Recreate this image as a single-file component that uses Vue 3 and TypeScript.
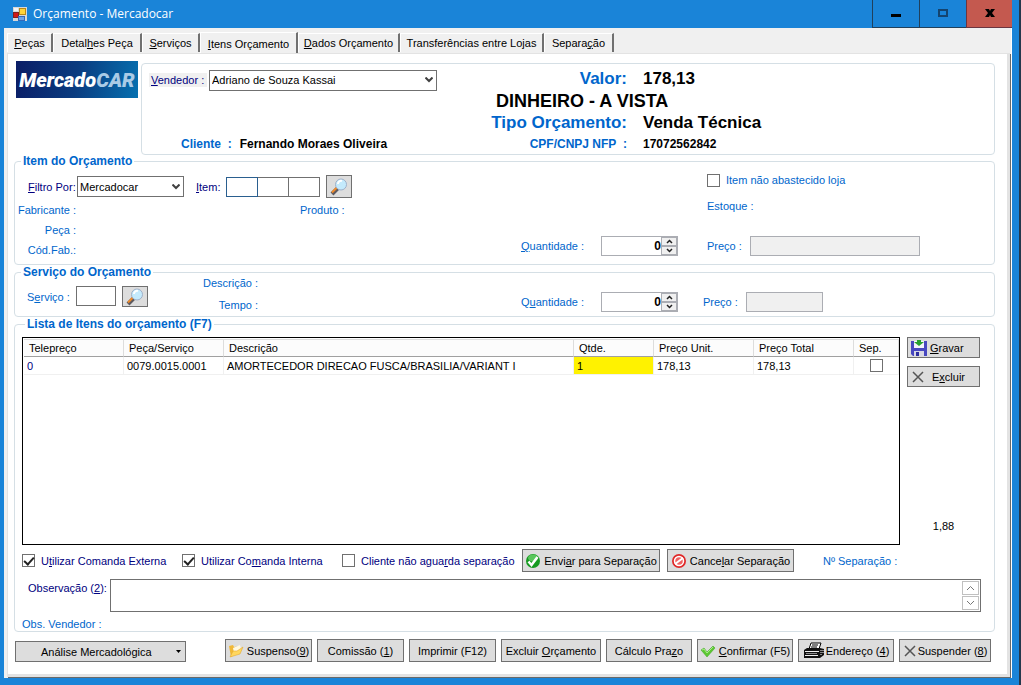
<script setup lang="ts">
import { h, ref } from 'vue'

interface Item {
  code: string
  part: string
  description: string
  qty: string
  unit: string
  total: string
  separated: boolean
}

// Renders a caption in which "&" marks the access key letter.
const Caption = (props: { text: string }) => {
  const at = props.text.indexOf('&')
  if (at < 0) return h('span', props.text)
  return h('span', [props.text.slice(0, at), h('u', props.text[at + 1]), props.text.slice(at + 2)])
}
Caption.props = ['text']

const tabs = [
  { text: '&Peças', size: 'w46' },
  { text: 'Detal&hes Peça', size: 'w88' },
  { text: '&Serviços', size: 'w58' },
  { text: '&Itens Orçamento', size: 'w98' },
  { text: '&Dados Orçamento', size: 'w102' },
  { text: 'Transferências entre Lo&jas', size: 'w142' },
  { text: 'Separa&ção', size: 'w70' },
]
const activeTab = ref(3)

const columns = ['Telepreço', 'Peça/Serviço', 'Descrição', 'Qtde.', 'Preço Unit.', 'Preço Total', 'Sep.']
const items = ref<Item[]>([
  {
    code: '0',
    part: '0079.0015.0001',
    description: 'AMORTECEDOR DIRECAO FUSCA/BRASILIA/VARIANT I',
    qty: '1',
    unit: '178,13',
    total: '178,13',
    separated: false,
  },
])

const itemQty = ref(0)
const serviceQty = ref(0)
const notStocked = ref(false)
const externalOrder = ref(true)
const internalOrder = ref(true)
const noWait = ref(false)
const note = ref('')
</script>

<template>
  <div class="window">
    <header class="titlebar">
      <svg class="app-icon" viewBox="0 0 14 14" width="14" height="14">
        <rect width="14" height="14" fill="#d8d8d8" />
        <rect x="0.5" y="5.5" width="5" height="5" fill="#d01818" stroke="#802020" />
        <rect x="6.5" y="1.5" width="6" height="6" fill="#ffd43a" stroke="#b88a18" />
        <rect x="5.500" y="9.500" width="6" height="4" fill="#6ba4ec" stroke="#3468b8" />
        <path d="M1 1h4v3H1z" fill="#f4f4f4" />
      </svg>
      <h1>Orçamento - Mercadocar</h1>
      <div class="window-buttons">
        <button type="button" aria-label="Minimizar">
          <svg viewBox="0 0 12 12" width="12" height="12"><path d="M1 6h10v3H1z" fill="#000" /></svg>
        </button>
        <button type="button" aria-label="Maximizar">
          <svg viewBox="0 0 12 12" width="12" height="12"><path d="M2 2h8v6H2z" fill="none" stroke="#14446f" stroke-width="2" /></svg>
        </button>
        <button type="button" class="close" aria-label="Fechar">
          <svg viewBox="0 0 12 12" width="12" height="12"><path d="M1 1h4l1 2 1-2h4L8 5l3 4H7L6 7 5 9H1l3-4z" fill="#000" /></svg>
        </button>
      </div>
    </header>

    <main class="client">
      <nav class="tabs" role="tablist">
        <button
          v-for="(tab, i) in tabs"
          :key="tab.text"
          type="button"
          role="tab"
          :class="['tab', tab.size, { active: i === activeTab }]"
          :aria-selected="i === activeTab"
          @click="activeTab = i"
        >
          <Caption :text="tab.text" />
        </button>
      </nav>

      <div class="page">
        <section class="top">
          <div class="logo">Mercado<span>CAR</span></div>
          <div class="summary">
            <div class="seller">
              <label class="shaded" for="seller"><Caption text="&Vendedor :" /></label>
              <div class="combo seller-combo">
                <select id="seller"><option>Adriano de Souza Kassai</option></select>
                <svg viewBox="0 0 8 6" width="8" height="6"><path d="M0.500 0.500L4 4 7.500 0.500" /></svg>
              </div>
            </div>
            <p class="big pair"><span class="blue">Valor:</span><span>178,13</span></p>
            <p class="big payment">DINHEIRO - A VISTA</p>
            <p class="big pair"><span class="blue">Tipo Orçamento:</span><span>Venda Técnica</span></p>
            <p class="client-name"><span class="blue">Cliente&nbsp; :</span><span>Fernando Moraes Oliveira</span></p>
            <p class="strong pair"><span class="blue">CPF/CNPJ NFP&nbsp; :</span><span>17072562842</span></p>
          </div>
        </section>

        <fieldset class="item-box">
          <legend>Item do Orçamento</legend>
          <div class="left">
            <div class="line filter-line">
              <label class="navy filter-label" for="filter"><Caption text="&Filtro Por:" /></label>
              <div class="combo filter-combo">
                <select id="filter"><option>Mercadocar</option></select>
                <svg viewBox="0 0 8 6" width="8" height="6"><path d="M0.500 0.500L4 4 7.500 0.500" /></svg>
              </div>
              <label class="navy item-label" for="item1"><Caption text="&Item:" /></label>
              <div class="triple">
                <input id="item1" class="focused" type="text" />
                <input type="text" aria-label="Item, parte 2" />
                <input type="text" aria-label="Item, parte 3" />
              </div>
              <button type="button" class="btn search-btn" aria-label="Pesquisar item">
                <svg viewBox="0 0 18 18" width="18" height="18">
                  <path d="M2 16l6-6" stroke="#5d5a60" stroke-width="4" />
                  <path d="M2 14.500l5-5" stroke="#f08a28" stroke-width="2" />
                  <circle cx="11" cy="6.500" r="5.500" fill="#c4eafc" stroke="#9fb0c8" />
                  <path d="M8 6a3 3 0 0 1 4-3" fill="none" stroke="#fff" stroke-width="2" />
                </svg>
              </button>
            </div>
            <div class="facts">
              <span>Fabricante :</span><span class="product">Produto :</span>
              <span>Peça :</span><span></span>
              <span>Cód.Fab.:</span><span></span>
            </div>
          </div>
          <div class="right">
            <label class="check stock-check"><input v-model="notStocked" type="checkbox" /><span>Item não abastecido loja</span></label>
            <span class="stock">Estoque :</span>
            <div class="line amounts">
              <label class="qty-label" for="qty1"><Caption text="&Quantidade :" /></label>
              <div class="spinner">
                <input id="qty1" v-model="itemQty" type="text" />
                <button type="button" aria-label="Aumentar" @click="itemQty++"><svg viewBox="0 0 7 5" width="7" height="5"><path d="M1 4l2.500-2.500L6 4" /></svg></button>
                <button type="button" aria-label="Diminuir" @click="itemQty--"><svg viewBox="0 0 7 5" width="7" height="5"><path d="M1 1l2.500 2.500L6 1" /></svg></button>
              </div>
              <label class="price-label" for="price1">Preço :</label>
              <input id="price1" class="price wide" type="text" disabled />
            </div>
          </div>
        </fieldset>

        <fieldset class="service-box">
          <legend>Serviço do Orçamento</legend>
          <div class="left service-left">
            <label class="service-label" for="service"><Caption text="S&erviço :" /></label>
            <input id="service" class="service-input" type="text" />
            <button type="button" class="btn search-btn" aria-label="Pesquisar serviço">
              <svg viewBox="0 0 18 18" width="18" height="18">
                <path d="M2 16l6-6" stroke="#5d5a60" stroke-width="4" />
                <path d="M2 14.500l5-5" stroke="#f08a28" stroke-width="2" />
                <circle cx="11" cy="6.500" r="5.500" fill="#c4eafc" stroke="#9fb0c8" />
                <path d="M8 6a3 3 0 0 1 4-3" fill="none" stroke="#fff" stroke-width="2" />
              </svg>
            </button>
            <div class="service-facts"><span>Descrição :</span><span>Tempo :</span></div>
          </div>
          <div class="right">
            <div class="line amounts">
              <label class="qty-label" for="qty2"><Caption text="Q&uantidade :" /></label>
              <div class="spinner">
                <input id="qty2" v-model="serviceQty" type="text" />
                <button type="button" aria-label="Aumentar" @click="serviceQty++"><svg viewBox="0 0 7 5" width="7" height="5"><path d="M1 4l2.500-2.500L6 4" /></svg></button>
                <button type="button" aria-label="Diminuir" @click="serviceQty--"><svg viewBox="0 0 7 5" width="7" height="5"><path d="M1 1l2.500 2.500L6 1" /></svg></button>
              </div>
              <label class="price-label short" for="price2">Preço :</label>
              <input id="price2" class="price" type="text" disabled />
            </div>
          </div>
        </fieldset>

        <fieldset class="list-box">
          <legend>Lista de Itens do orçamento (F7)</legend>
          <div class="list-area">
            <div class="grid-frame">
              <table>
                <colgroup>
                  <col class="c100" /><col class="c100" /><col /><col class="c80" /><col class="c100" /><col class="c100" /><col class="c45" />
                </colgroup>
                <thead>
                  <tr><th v-for="c in columns" :key="c" scope="col">{{ c }}</th></tr>
                </thead>
                <tbody>
                  <tr v-for="row in items" :key="row.part">
                    <td class="code">{{ row.code }}</td>
                    <td>{{ row.part }}</td>
                    <td>{{ row.description }}</td>
                    <td class="qty">{{ row.qty }}</td>
                    <td>{{ row.unit }}</td>
                    <td>{{ row.total }}</td>
                    <td class="sep"><input v-model="row.separated" type="checkbox" aria-label="Separado" /></td>
                  </tr>
                </tbody>
              </table>
            </div>
            <aside class="list-actions">
              <button type="button" class="btn side">
                <svg viewBox="0 0 16 16" width="16" height="16">
                  <path d="M0 1h16v15H2l-2-2z" fill="#4848c0" />
                  <path d="M3 1h10v7H3z" fill="#f4f4fa" />
                  <path d="M3 11h10v5H3z" fill="#d8d8e4" />
                  <path d="M5 12h3v4H5z" fill="#3030a0" />
                  <path d="M6 0h4v2h3L8 6 3 2h3z" fill="#28a030" />
                </svg>
                <Caption text="&Gravar" />
              </button>
              <button type="button" class="btn side">
                <svg viewBox="0 0 16 16" width="16" height="16"><path d="M2 3l10 10M12 3L2 13" stroke="#555" stroke-width="1.500" /></svg>
                <Caption text="E&xcluir" />
              </button>
              <output>1,88</output>
            </aside>
          </div>

          <div class="options">
            <label class="check navy opt1"><input v-model="externalOrder" type="checkbox" /><Caption text="U&tilizar Comanda Externa" /></label>
            <label class="check navy opt1"><input v-model="internalOrder" type="checkbox" /><Caption text="Utilizar Co&manda Interna" /></label>
            <label class="check navy opt2"><input v-model="noWait" type="checkbox" /><Caption text="Cliente não agua&rda separação" /></label>
            <button type="button" class="btn send">
              <svg viewBox="0 0 16 16" width="16" height="16">
                <circle cx="8" cy="8" r="7" fill="#159a20" />
                <ellipse cx="8" cy="5" rx="5" ry="3.500" fill="#59c65c" />
                <path d="M3.500 8.500L6.500 12 12.500 4" fill="none" stroke="#fff" stroke-width="2.500" />
              </svg>
              <Caption text="Envi&ar para Separação" />
            </button>
            <button type="button" class="btn cancel">
              <svg viewBox="0 0 16 16" width="16" height="16">
                <circle cx="8" cy="8" r="7" fill="#e02828" />
                <circle cx="8" cy="8" r="4.500" fill="#f06060" stroke="#fff" stroke-width="1.500" />
                <path d="M4 11l8-6" stroke="#fff" stroke-width="2" />
              </svg>
              <Caption text="Cance&lar Separação" />
            </button>
            <span class="sep-number">Nº Separação :</span>
          </div>

          <div class="note">
            <label class="navy" for="note"><Caption text="Observação (&2):" /></label>
            <div class="note-frame">
              <textarea id="note" v-model="note"></textarea>
              <div class="scroll">
                <button type="button" aria-label="Rolar para cima"><svg viewBox="0 0 9 6" width="9" height="6"><path d="M1 5l3.500-3.500L8 5" /></svg></button>
                <button type="button" aria-label="Rolar para baixo"><svg viewBox="0 0 9 6" width="9" height="6"><path d="M1 1l3.500 3.500L8 1" /></svg></button>
              </div>
            </div>
          </div>
          <p class="seller-note">Obs. Vendedor :</p>
        </fieldset>

        <footer class="actions">
          <button type="button" class="btn analysis">
            <span>Análise Mercadológica</span>
            <svg viewBox="0 0 5 3" width="5" height="3"><path d="M0 0h5L2.500 3z" fill="#000" /></svg>
          </button>
          <button type="button" class="btn b87">
            <svg viewBox="0 0 16 16" width="16" height="16">
              <path d="M1 3l4-1 1 2 6-1-1 6-8 5z" fill="#f0b838" />
              <path d="M5 5l7-3 1 4-7 4z" fill="#fff8e0" />
              <path d="M2 14l3-6 4 0 6-4-3 7z" fill="#ffd75e" stroke="#e0a020" stroke-width="0.500" />
            </svg>
            <Caption text="Suspenso(&9)" />
          </button>
          <button type="button" class="btn b87"><Caption text="Comissão (&1)" /></button>
          <button type="button" class="btn b87"><Caption text="Imprimir (F12)" /></button>
          <button type="button" class="btn b100"><Caption text="Excluir &Orçamento" /></button>
          <button type="button" class="btn b86"><Caption text="Cálculo Pra&zo" /></button>
          <button type="button" class="btn b96">
            <svg viewBox="0 0 16 16" width="16" height="16"><path d="M1 7l3-2 3 4 6-6 2 2-8 9z" fill="#5cc832" stroke="#38a020" stroke-width="0.500" /><path d="M2 7l2-1 3 4 6-6" fill="none" stroke="#a8ec88" /></svg>
            <Caption text="&Confirmar (F5)" />
          </button>
          <button type="button" class="btn b96 printer">
            <svg viewBox="0 0 22 18" width="22" height="18">
              <path d="M6 7l2-6h10l-2 6z" fill="#fff" stroke="#000" />
              <path d="M9 3h6M8 5h6" stroke="#000" />
              <path d="M1 8l3-2h13l4 1v6l-4 3H1z" fill="#111" />
              <path d="M2 9.500h14M2 13.500h13" stroke="#eee" />
              <path d="M3 11.500h11" stroke="#888" />
              <path d="M18 8v6M20 8v4" stroke="#fff" stroke-dasharray="1 1" />
            </svg>
            <Caption text="Endereço (&4)" />
          </button>
          <button type="button" class="btn b92 suspend">
            <svg viewBox="0 0 14 16" width="14" height="16"><path d="M2 3l10 10M12 3L2 13" stroke="#555" stroke-width="1.500" /></svg>
            <Caption text="Suspender (&8)" />
          </button>
        </footer>
      </div>
    </main>
  </div>
</template>

<style>
body {
  margin: 0;
}
</style>

<style scoped>
* {
  box-sizing: border-box;
}
.window {
  display: flex;
  flex-direction: column;
  min-height: 100vh;
  padding: 0 7px 7px 4px;
  border-right: 2px solid #24384c;
  background: #1a84d8;
  color: #000;
  font: 11px/14px "Liberation Sans", Arial, sans-serif;
}
button,
input,
select,
textarea {
  margin: 0;
  padding: 0;
  border: 1px solid #707070;
  border-radius: 0;
  background: #fff;
  color: #000;
  font: inherit;
}
p {
  margin: 0;
}
:deep(u) {
  text-underline-offset: 1px;
}
.titlebar {
  display: flex;
  align-items: center;
  height: 28px;
  padding-left: 9px;
}
h1 {
  flex: 1;
  margin: 0 0 0 6px;
  color: #fff;
  font: 12px/18px "Open Sans", "Noto Sans", sans-serif;
}
.window-buttons {
  display: flex;
  align-self: stretch;
}
.window-buttons button {
  display: flex;
  align-items: center;
  justify-content: center;
  width: 47px;
  border: solid #20405c;
  border-width: 0 0 1px 1px;
  background: #1a84d8;
}
.window-buttons .close {
  width: 46px;
  border-color: #6b3540;
  background: #c4594f;
}
.client {
  display: flex;
  flex: 1;
  flex-direction: column;
  padding: 1px 1px 1px 3px;
  border-right: 1px solid #fff;
  background: #f0f0f0;
}
.tabs {
  display: flex;
  align-items: flex-end;
  height: 24px;
}
.tab {
  height: 19px;
  margin-bottom: 1px;
  border: solid #fff;
  border-width: 1px 2px 0 1px;
  border-right-color: #707070;
  background: #f0f0f0;
  white-space: nowrap;
  font-size: 11px;
}
.tab.active {
  height: 21px;
  margin-bottom: 0;
  padding-top: 2px;
}
.w46 { width: 46px; }
.w58 { width: 58px; }
.w70 { width: 70px; }
.w88 { width: 89px; }
.w98 { width: 98px; }
.w102 { width: 102px; }
.w142 { width: 144px; }
.page {
  display: flex;
  flex: 1;
  flex-direction: column;
  padding: 7px 12px 12px 6px;
  border: solid #e3e3e3;
  border-width: 1px 3px 3px 1px;
  background: #fff;
  box-shadow: 1px 1px 0 #696969;
}
.top {
  display: flex;
  align-items: flex-start;
  gap: 3px;
  padding-left: 2px;
}
.logo {
  flex: none;
  width: 122px;
  height: 37px;
  background: linear-gradient(100deg, #0b1d66, #0a3c80 50%, #0670b0);
  color: #fff;
  text-align: center;
  white-space: nowrap;
  font: italic 900 20px/38px Roboto, "Liberation Sans", sans-serif;
}
.logo span {
  color: #a9cbe6;
}
.summary {
  display: grid;
  flex: 1;
  grid-template-columns: 354px 1fr;
  grid-template-rows: 21px 21px 21px 20px;
  row-gap: 1px;
  align-items: center;
  margin-top: 2px;
  padding: 4px 0 0;
  border: 1px solid #d5dfe5;
  border-radius: 4px;
}
.seller {
  display: flex;
  gap: 2px;
  align-items: center;
  padding: 3px 0 0 7px;
}
.shaded {
  width: 58px;
  padding-left: 2px;
  background: #f0f0f0;
  color: #000080;
}
.combo {
  display: grid;
  align-items: center;
}
.combo select,
.combo svg {
  grid-area: 1 / 1;
}
.combo select {
  width: 100%;
  height: 21px;
  padding-left: 2px;
  appearance: none;
}
.combo svg {
  justify-self: end;
  margin-right: 4px;
  pointer-events: none;
}
.combo path {
  fill: none;
  stroke: #404040;
  stroke-width: 2;
}
.seller-combo {
  width: 228px;
}
.filter-combo {
  width: 107px;
}
.big {
  font-size: 17px;
  font-weight: bold;
  line-height: 20px;
}
.pair {
  display: grid;
  grid-column: 2;
  grid-template-columns: 131px 1fr;
  column-gap: 16px;
  white-space: nowrap;
}
.pair .blue {
  justify-self: end;
}
.payment {
  grid-column: 2;
  font-size: 18px;
}
.blue {
  color: #0066cc;
}
.client-name,
.strong {
  grid-row: 4;
  font-size: 12px;
  font-weight: bold;
}
.client-name {
  display: flex;
  gap: 8px;
  padding-left: 39px;
}
fieldset {
  display: flex;
  min-width: 0;
  margin: 0;
  padding: 0;
  border: 1px solid #d5dfe5;
  border-radius: 4px;
  color: #0066cc;
}
legend {
  margin-left: 6px;
  padding: 0 2px;
  font-size: 12px;
  font-weight: bold;
}
.item-box {
  height: 111px;
  margin-top: -1px;
}
.service-box {
  height: 52px;
}
.left {
  width: 506px;
}
.right {
  flex: 1;
}
.line {
  display: flex;
  align-items: center;
}
.navy {
  color: #000080;
}
.filter-line {
  padding: 7px 0 0 13px;
}
.filter-label {
  width: 49px;
}
.item-label {
  width: 30px;
  margin-left: 12px;
}
.triple {
  display: flex;
  width: 94px;
}
.triple input {
  width: 32px;
  height: 20px;
  margin-right: -1px;
}
.triple .focused {
  z-index: 1;
  border-color: #2a5f8f;
}
.btn {
  display: flex;
  align-items: center;
  justify-content: center;
  gap: 3px;
  height: 23px;
  background: #ddd;
  white-space: nowrap;
}
.btn svg {
  flex: none;
}
.search-btn {
  width: 26px;
  margin-left: 6px;
}
.facts {
  display: grid;
  grid-template-columns: 61px 1fr;
  grid-auto-rows: 20px;
  align-items: center;
  padding-top: 2px;
}
.facts span:nth-child(odd) {
  text-align: right;
}
.facts .product {
  padding-left: 224px;
}
.check {
  display: flex;
  gap: 6px;
  align-items: center;
}
input[type="checkbox"] {
  display: grid;
  flex: none;
  place-items: center;
  width: 13px;
  height: 13px;
  appearance: none;
}
input[type="checkbox"]:checked::after {
  width: 8px;
  height: 4px;
  border: solid #222;
  border-width: 0 0 2px 2px;
  content: "";
  transform: translateY(-1px) rotate(-48deg);
}
.stock-check {
  height: 24px;
  padding-left: 186px;
}
.stock {
  display: block;
  padding: 7px 0 7px 186px;
}
.item-box .amounts {
  margin-top: 16px;
}
.service-box .amounts {
  margin-top: 13px;
}
.qty-label {
  width: 80px;
}
.spinner {
  display: grid;
  grid-template-columns: 1fr 16px;
  grid-template-rows: 9px 9px;
  width: 77px;
  height: 20px;
  border: 1px solid #abadb3;
}
.spinner input {
  grid-row: 1 / 3;
  min-width: 0;
  border: 0;
  text-align: right;
  font-size: 12px;
  font-weight: bold;
}
.spinner button {
  display: grid;
  place-items: center;
  border: 1px solid #abadb3;
  background: #f0f0f0;
}
.spinner path {
  fill: none;
  stroke: #222;
  stroke-width: 1.5;
}
.price-label {
  width: 43px;
  margin-left: 29px;
}
.price-label.short {
  width: 43px;
  margin-left: 25px;
}
.price {
  width: 77px;
  height: 20px;
  border-color: #abadb3;
  background: #f0f0f0;
}
.price.wide {
  width: 170px;
}
.service-left {
  display: flex;
  align-items: flex-start;
  padding-top: 7px;
}
.service-label {
  width: 61px;
  padding: 4px 0 0 12px;
}
.service-input {
  width: 40px;
  height: 20px;
}
.service-left .search-btn {
  height: 21px;
}
.service-facts {
  display: grid;
  gap: 8px;
  width: 110px;
  margin-top: -10px;
  text-align: right;
}
.list-box {
  display: block;
  flex: 1;
}
.list-box legend {
  margin-left: 10px;
}
.list-area {
  display: flex;
  gap: 7px;
  min-height: 214px;
  padding: 6px 14px 0 7px;
}
.grid-frame {
  flex: 1;
  padding: 1px 0 0 1px;
  border: 1px solid #000;
  background: #fff;
}
table {
  width: 100%;
  border-collapse: separate;
  border-spacing: 0;
  table-layout: fixed;
  color: #000;
}
.c45 { width: 45px; }
.c80 { width: 80px; }
.c100 { width: 100px; }
th {
  height: 18px;
  padding: 0 0 0 5px;
  border-top: 1px solid #ddd;
  border-right: 1px solid #ddd;
  border-bottom: 1px solid #a0a0a0;
  background: #fcfcfc;
  text-align: left;
  font-weight: normal;
}
td {
  height: 18px;
  padding: 0 0 0 3px;
  border: solid #f0f0f0;
  border-width: 0 1px 1px 0;
  white-space: nowrap;
}
.code {
  color: #000080;
}
.qty {
  background: #fff200;
}
.sep {
  padding: 0;
}
.sep input {
  margin: auto;
}
.list-actions {
  display: flex;
  flex-direction: column;
  gap: 8px;
  width: 73px;
}
.side {
  justify-content: flex-start;
  height: 21px;
  padding-left: 3px;
}
.side:nth-child(2) svg {
  margin-right: 2px;
}
output {
  margin: auto 0 12px;
  color: #000;
  text-align: center;
}
.options {
  display: flex;
  align-items: center;
  padding: 4px 0 0 7px;
}
.opt1 {
  width: 160px;
}
.opt2 {
  width: 180px;
}
.send {
  width: 138px;
}
.cancel {
  width: 127px;
  margin-left: 7px;
}
.sep-number {
  margin-left: 29px;
}
.note {
  display: flex;
  gap: 6px;
  padding: 7px 13px 0 13px;
}
.note label {
  width: 76px;
  padding-top: 2px;
  white-space: nowrap;
}
.note-frame {
  display: flex;
  flex: 1;
  height: 33px;
  padding: 1px;
  border: 1px solid #707070;
}
.note textarea {
  flex: 1;
  border: 0;
  resize: none;
}
.scroll {
  display: grid;
  gap: 1px;
  width: 17px;
}
.scroll button {
  display: grid;
  place-items: center;
  border-color: #c0c0c0;
}
.scroll path {
  fill: none;
  stroke: #777;
}
.seller-note {
  padding: 5px 0 0 7px;
}
.actions {
  display: flex;
  gap: 5px;
  align-items: flex-end;
  padding: 7px 4px 0 1px;
}
.analysis {
  width: 171px;
  height: 21px;
  margin-right: auto;
  padding: 0 4px 0 25px;
  justify-content: space-between;
}
.b86 { width: 86px; }
.b87 { width: 87px; }
.b92 { width: 92px; }
.b96 { width: 96px; }
.b100 { width: 100px; }
.printer,
.suspend {
  gap: 1px;
}
</style>
